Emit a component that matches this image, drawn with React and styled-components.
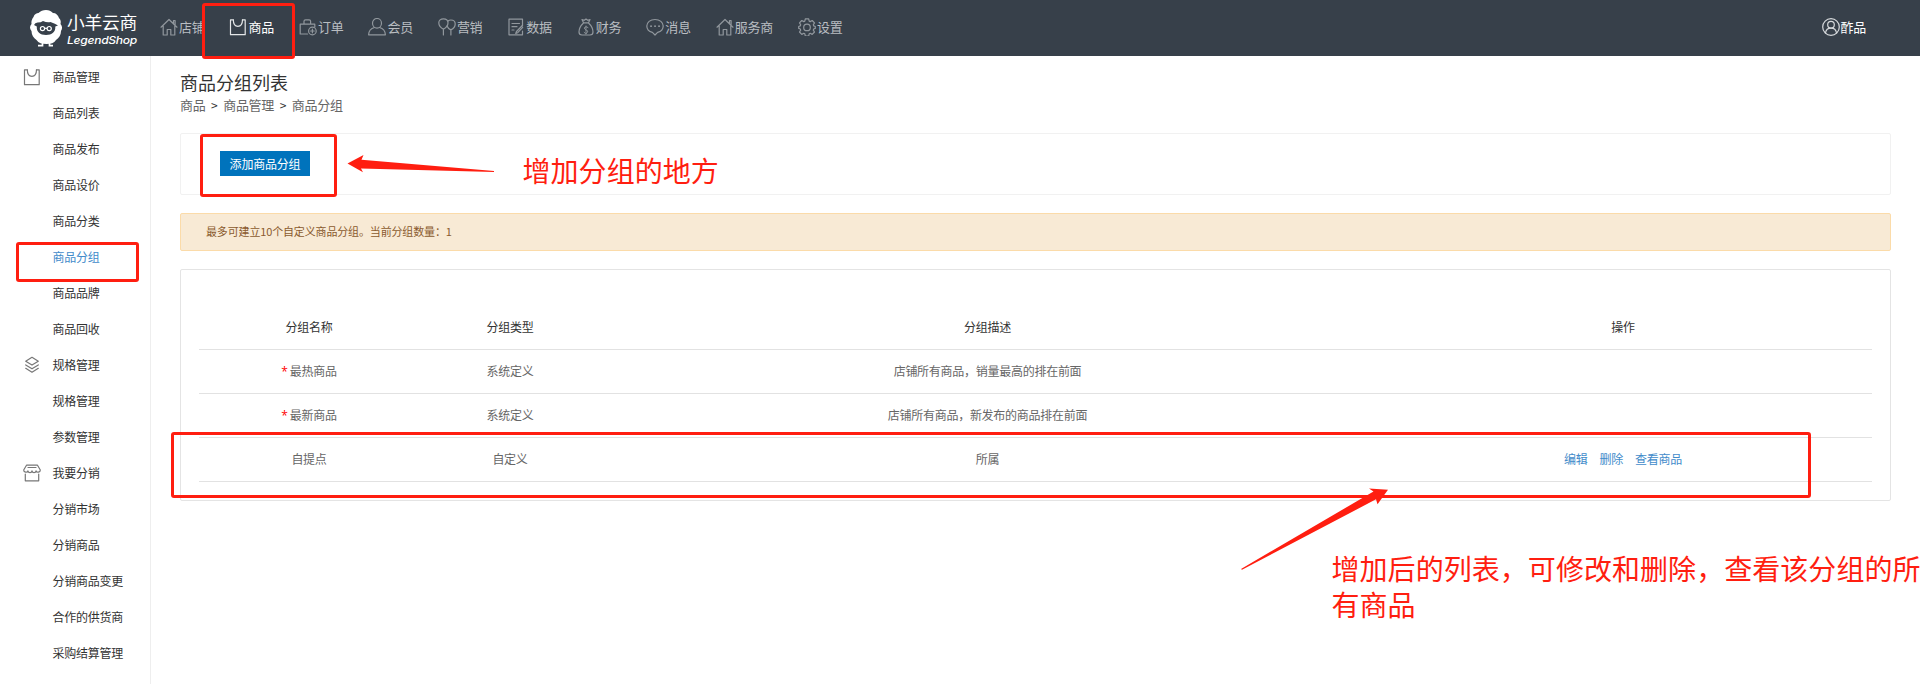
import React from 'react';
import styled, { createGlobalStyle } from 'styled-components';

const GlobalStyle = createGlobalStyle`
    * {
        box-sizing: border-box;
    }

    body {
        margin: 0;
        overflow: hidden;
        background: #fff;
        font-family: "Noto Sans CJK SC", sans-serif;
        font-size: 12px;
        letter-spacing: -0.27px;
        color: #333;
    }
`;

const Page = styled.div`
    position: relative;
    display: flex;
    flex-direction: column;
    height: 684px;
    overflow: hidden;
`;

const Header = styled.header`
    display: flex;
    align-items: flex-start;
    height: 56px;
    flex: none;
    padding-right: 54px;
    background: #37404a;
`;

const Logo = styled.svg`
    display: block;
    width: 132px;
    height: 56px;
    margin-left: 28px;
    flex: none;
`;

const Nav = styled.nav`
    display: flex;
    flex: 1;
    gap: 25px;
`;

const NavItem = styled.a`
    display: flex;
    align-items: center;
    gap: 1px;
    height: 54px;
    font-size: 13px;
    color: ${props => props.$active ? '#fff' : '#b9bdc1'};
    white-space: nowrap;
`;

const NavLabel = styled.span`
    padding-bottom: 2px;
`;

const Icon = styled.svg`
    display: block;
    width: 18px;
    height: 18px;
    flex: none;
    fill: none;
    stroke: ${props => props.$color || '#91979d'};
    stroke-width: 1.2;
    stroke-linecap: round;
    stroke-linejoin: round;
`;

const Main = styled.div`
    display: flex;
    flex: 1;
    min-height: 0;
`;

const Sidebar = styled.aside`
    width: 151px;
    flex: none;
    padding-top: 3px;
    border-right: 1px solid #eee;
`;

const MenuItem = styled.div`
    display: grid;
    grid-template-columns: 17px 1fr;
    column-gap: 12.5px;
    align-items: center;
    height: 36px;
    padding-left: 23px;
    color: ${props => props.$active ? '#428bca' : '#333'};
    white-space: nowrap;
`;

const MenuLabel = styled.span`
    grid-column: 2;
    padding-bottom: 2px;
`;

const Content = styled.main`
    flex: 1;
    padding: 13px 29px 0 29px;
`;

const Title = styled.h1`
    margin: 0;
    font-size: 18px;
    font-weight: 400;
    line-height: 26px;
    letter-spacing: 0;
`;

const Breadcrumb = styled.div`
    display: flex;
    gap: 5.6px;
    height: 20px;
    line-height: 20px;
    font-size: 13px;
    color: #666;
`;

const Separator = styled.span`
    width: 6.5px;
    font-size: 12px;
    color: #333;
`;

const Toolbar = styled.div`
    display: flex;
    align-items: center;
    height: 62px;
    margin-top: 18px;
    padding: 0 0 1px 39px;
    border: 1px solid #f1f1f1;
    border-radius: 2px;
`;

const AddButton = styled.button`
    width: 90px;
    height: 25px;
    padding: 0 0 1px;
    border: none;
    background: #0073bc;
    color: #fff;
    font-family: inherit;
    font-size: 12px;
    letter-spacing: -0.2px;
`;

const Notice = styled.div`
    display: flex;
    align-items: center;
    height: 38px;
    margin-top: 18px;
    padding: 0 0 2px 25px;
    border: 1px solid #fbdba9;
    border-radius: 2px;
    background: #f8ead5;
    color: #8a5a2e;
    font-size: 11px;
    letter-spacing: -0.15px;
`;

const Panel = styled.section`
    height: 232px;
    margin-top: 18px;
    padding: 36px 18px 0;
    border: 1px solid #e4e4e4;
    border-radius: 2px;
`;

const Row = styled.div`
    display: grid;
    grid-template-columns: 221px 181px 774px 1fr;
    align-items: center;
    height: 44px;
    padding-bottom: 2px;
    border-bottom: 1px solid #e2e2e2;
    color: ${props => props.$head ? '#333' : '#666'};
    text-align: center;
`;

const Cell = styled.div`
    padding-right: 1px;
`;

const Star = styled.span`
    margin-right: 2px;
    color: #f00;
    font-family: "Open Sans", sans-serif;
`;

const Actions = styled(Cell)`
    display: flex;
    justify-content: center;
    gap: 12px;
    color: #428bca;
`;

// red hand-drawn style marks that lie over the page
const Mark = styled.div`
    position: absolute;
    left: ${props => props.$x}px;
    top: ${props => props.$y}px;
    width: ${props => props.$w}px;
    height: ${props => props.$h}px;
    border: 3px solid #ff1e10;
    border-radius: 3px;
`;

const Arrows = styled.svg`
    position: absolute;
    left: 0;
    top: 0;
    width: 1920px;
    height: 684px;
    fill: #ff1e10;
    pointer-events: none;
`;

const Note = styled.div`
    position: absolute;
    left: ${props => props.$x}px;
    top: ${props => props.$y}px;
    color: #ff1e10;
    font-size: 28px;
    line-height: 36px;
    letter-spacing: 0.05px;
    white-space: pre;
`;

const ICONS = {
    home: <path d="M1 9.2 9 1.5l8 7.7M3.2 8v9h4v-5.5h3.6V17h4V8M13.5 5.2V2.5h1.6v4.3" />,
    bag: <path d="M4 1.8H1.5v14.9h14.7V1.8h-2.4M4.3 1.6c0 3 .2 6.8 4.6 6.8s4.6-3.8 4.6-6.8" />,
    order: (
        <>
            <path d="M8.5 16H1.2V6.2h14.6V9M5 6V3.3q0-1.5 1.5-1.5h3.6q1.5 0 1.5 1.5V6" />
            <circle cx="13.4" cy="13" r="3.8" />
            <path d="M13.4 11.2v3.6M11.6 13h3.6" />
        </>
    ),
    member: (
        <>
            <ellipse cx="9" cy="5.3" rx="4.5" ry="4.8" />
            <path d="M6.5 9.5C3 10.4.8 12.7.6 16.8h16.8c-.2-4.1-2.4-6.4-5.9-7.3" />
        </>
    ),
    balloon: (
        <>
            <path d="M5.4 11.2C3 10 .8 7.4.8 4.8.8 2.4 2.7.8 5.4.8S10 2.4 10 4.8c0 2.6-2.2 5.2-4.6 6.4zM5.4 11.2V17" />
            <path d="M10 3c.8-.7 1.7-1 2.9-1 2.5 0 4.3 1.7 4.3 4 0 2.4-1.9 4.7-4.3 5.9-1.9-.9-3.2-2.2-3.9-3.9M12.9 12v5" />
        </>
    ),
    data: (
        <>
            <path d="M15.5 8V1.2H2v15.6h13.5V13M5 5.5h7.5M5 8.7h5M5 12h2" />
            <path d="M15.3 7.5 9.5 13.5l-.8 2 2-.8 5-5.3" />
        </>
    ),
    money: (
        <>
            <path d="M6.5 4.8 5 1.5l2.3.8L9 1l1.7 1.3 2.3-.8-1.5 3.3zM6.5 5C4 7.3 2 10.3 2 14q0 3 3 3h8q3 0 3-3c0-3.7-2-6.7-4.5-9" />
            <path d="M11 9.5q-1.5-1.2-3-.4t0 2.2 2.4 1.3-.3 2.2-3-.4M9 8v7.8" strokeWidth="0.9" />
        </>
    ),
    message: (
        <>
            <path d="M9 1.5c4.8 0 8.2 2.8 8.2 6.6 0 3.3-2.3 5.5-5.6 6.3L9 17l-2.6-2.6C3.1 13.6.8 11.4.8 8.1.8 4.3 4.2 1.5 9 1.5z" />
            <path d="M5 8.2h.1M9 8.2h.1M13 8.2h.1" strokeWidth="1.8" />
        </>
    ),
    gear: (
        <>
            <path d="M7.3.9h3.4l.5 2.2 1 .5 2-1.1 2.3 2.4-1.2 1.9.4 1.1 1.6.6v1.9l-1.6.6-.4 1.1 1.2 1.9-2.3 2.4-2-1.1-1 .5-.5 2.2H7.3l-.5-2.2-1-.5-2 1.1-2.3-2.4 1.2-1.9-.4-1.1-1.6-.6V8.5l1.6-.6.4-1.1L1.5 4.9l2.3-2.4 2 1.1 1-.5z" />
            <circle cx="9" cy="9.4" r="3.3" />
        </>
    ),
    user: (
        <>
            <circle cx="9" cy="9" r="8.3" />
            <circle cx="9" cy="6.7" r="3.3" />
            <path d="M3.5 15c.4-3 2.3-4.8 5.5-4.8s5.1 1.8 5.5 4.8" />
        </>
    ),
    layers: <path d="M9 1.3 15.3 5.2 9 9.1 2.7 5.2zM2.7 8.9 9 12.8l6.3-3.9M2.7 12.3 9 16.2l6.3-3.9" />,
    shop: (
        <>
            <path d="M3.5 1.2h11L17.3 6c0 2.6-3.6 2.9-4.2.8-.5 2.3-3.7 2.3-4.1 0-.4 2.3-3.6 2.3-4.1 0C4.3 8.9.7 8.6.7 6zM5 3.5h8" />
            <path d="M2.3 10v6.8h13.4V10" />
        </>
    ),
};

const NAV = [
    { icon: 'home', label: '店铺' },
    { icon: 'bag', label: '商品', active: true },
    { icon: 'order', label: '订单' },
    { icon: 'member', label: '会员' },
    { icon: 'balloon', label: '营销' },
    { icon: 'data', label: '数据' },
    { icon: 'money', label: '财务' },
    { icon: 'message', label: '消息' },
    { icon: 'home', label: '服务商' },
    { icon: 'gear', label: '设置' },
];

const MENU = [
    { icon: 'bag', label: '商品管理' },
    { label: '商品列表' },
    { label: '商品发布' },
    { label: '商品设价' },
    { label: '商品分类' },
    { label: '商品分组', active: true },
    { label: '商品品牌' },
    { label: '商品回收' },
    { icon: 'layers', label: '规格管理' },
    { label: '规格管理' },
    { label: '参数管理' },
    { icon: 'shop', label: '我要分销' },
    { label: '分销市场' },
    { label: '分销商品' },
    { label: '分销商品变更' },
    { label: '合作的供货商' },
    { label: '采购结算管理' },
];

const GROUPS = [
    { name: '最热商品', type: '系统定义', desc: '店铺所有商品，销量最高的排在前面', system: true },
    { name: '最新商品', type: '系统定义', desc: '店铺所有商品，新发布的商品排在前面', system: true },
    { name: '自提点', type: '自定义', desc: '所属' },
];

const SheepLogo = () => (
    <Logo viewBox="28 0 132 56">
        <path
            fill="#fff"
            d="M46 10c3 0 5 1 7 3 3 0 5 2 6 5 2 2 2 4 1.500 6 2 2 2 5 .5 7 0 4-2 7-5 9-2 3-5 4-9.500 4s-8-1-10-4c-3-2-5-5-5-9-2-2-2-5 0-7-.5-3 .5-5 2-7 1-3 3-4 5-4 2-2 4.500-3 7.500-3z"
        />
        <path fill="#37404a" d="M34 25q1-2.500 3.500-2.500 3.500 0 5.500-1.500 4 1.800 7.500 1 5 1.500 7.500 3.500l-2.700 1c.4 5.500-3.300 8.500-9.300 8.500s-9.600-3-9.200-8.500z" />
        <g fill="none" stroke="#fff" strokeWidth="1.2">
            <circle cx="42.500" cy="28.600" r="2.100" />
            <circle cx="49.200" cy="28.600" r="2.100" />
            <path d="M44.600 28.300h2.500" />
        </g>
        <path fill="none" stroke="#fff" strokeWidth="1.700" d="M42.500 43v2.700H38M49.500 43v2.700H53" />
        <g fill="#fff">
            <text x="67" y="28.500" fontSize="17" fontWeight="400" textLength="70" lengthAdjust="spacingAndGlyphs">小羊云商</text>
            <text x="67" y="43.500" fontFamily="Inter" fontSize="11" fontWeight="500" fontStyle="italic" textLength="70" lengthAdjust="spacingAndGlyphs">LegendShop</text>
        </g>
    </Logo>
);

const GroupTable = () => (
    <Panel>
        <Row $head>
            <Cell>分组名称</Cell>
            <Cell>分组类型</Cell>
            <Cell>分组描述</Cell>
            <Cell>操作</Cell>
        </Row>
        {GROUPS.map(group => (
            <Row key={group.name}>
                <Cell>{group.system && <Star>*</Star>}{group.name}</Cell>
                <Cell>{group.type}</Cell>
                <Cell>{group.desc}</Cell>
                {!group.system && (
                    <Actions>
                        <span>编辑</span>
                        <span>删除</span>
                        <span>查看商品</span>
                    </Actions>
                )}
            </Row>
        ))}
    </Panel>
);

const App = () => (
    <Page>
        <GlobalStyle />
        <Header>
            <SheepLogo />
            <Nav>
                {NAV.map(item => (
                    <NavItem key={item.label} $active={item.active}>
                        <Icon viewBox="0 0 18 18" $color={item.active && '#e4e6e8'}>{ICONS[item.icon]}</Icon>
                        <NavLabel>{item.label}</NavLabel>
                    </NavItem>
                ))}
            </Nav>
            <NavItem $active>
                <Icon viewBox="0 0 18 18" $color="#d6d9dc">{ICONS.user}</Icon>
                <NavLabel>酢品</NavLabel>
            </NavItem>
        </Header>
        <Main>
            <Sidebar>
                {MENU.map((item, index) => (
                    <MenuItem key={index} $active={item.active}>
                        {item.icon && <Icon viewBox="0 0 18 18" $color="#777">{ICONS[item.icon]}</Icon>}
                        <MenuLabel>{item.label}</MenuLabel>
                    </MenuItem>
                ))}
            </Sidebar>
            <Content>
                <Title>商品分组列表</Title>
                <Breadcrumb>
                    <span>商品</span>
                    <Separator>&gt;</Separator>
                    <span>商品管理</span>
                    <Separator>&gt;</Separator>
                    <span>商品分组</span>
                </Breadcrumb>
                <Toolbar>
                    <AddButton>添加商品分组</AddButton>
                </Toolbar>
                <Notice>最多可建立10个自定义商品分组。当前分组数量：1</Notice>
                <GroupTable />
            </Content>
        </Main>
        <Mark $x={202} $y={3} $w={93} $h={56} />
        <Mark $x={16} $y={242} $w={123} $h={40} />
        <Mark $x={200} $y={134} $w={137} $h={63} />
        <Mark $x={171} $y={432} $w={1640} $h={66} />
        <Arrows viewBox="0 0 1920 684">
            <path d="M347.500 163.500 363.500 155l-2 4.800L494 171v1l-133-3.500 2 3.800z" />
            <path d="M1241 569 1373.500 491.500l-4.500-3 19 1.300-10.500 14.500-1.500-5-134 70.500z" />
        </Arrows>
        <Note $x={522.5} $y={152}>增加分组的地方</Note>
        <Note $x={1331.5} $y={550}>{'增加后的列表，可修改和删除，查看该分组的所\n有商品'}</Note>
    </Page>
);

export default App;
